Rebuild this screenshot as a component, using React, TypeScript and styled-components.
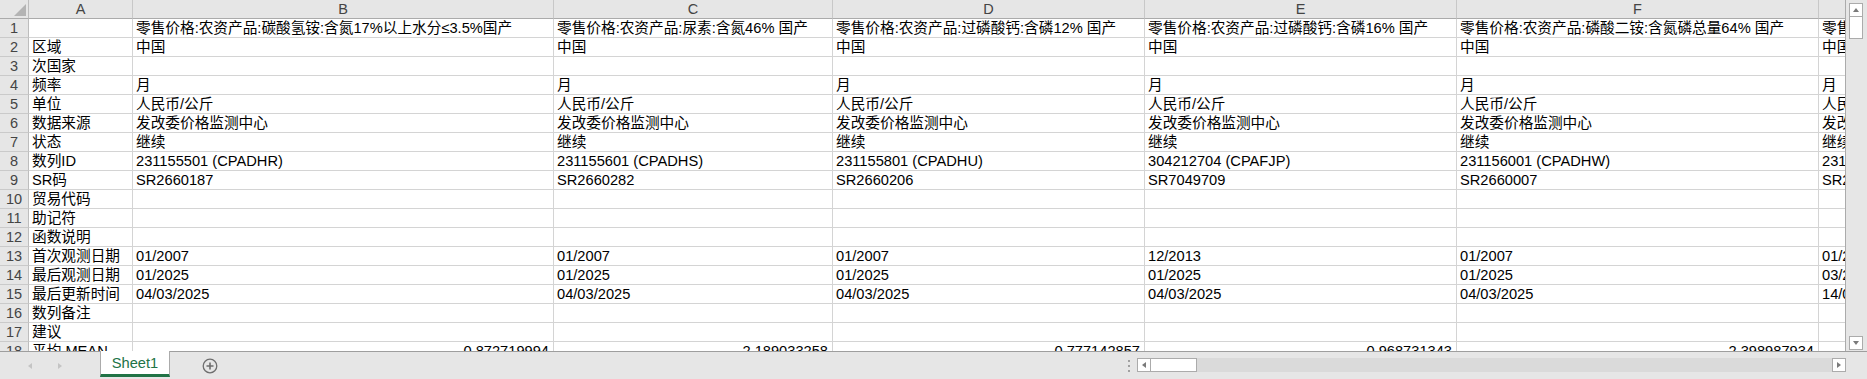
import React from "react";
import styled, { createGlobalStyle } from "styled-components";

const GlobalStyle = createGlobalStyle`
  html, body { margin: 0; padding: 0; background: #ffffff; }
  body { font-family: "Liberation Sans", "Noto Sans CJK SC", sans-serif; }
  * { box-sizing: border-box; }
`;

const FONT = `"Liberation Sans", "Noto Sans CJK SC", sans-serif`;

const Page = styled.div`
  width: 1867px;
  height: 379px;
  overflow: hidden;
  display: grid;
  grid-template-rows: 351px 28px;
  background: #ffffff;
  font-family: ${FONT};
`;

const Workspace = styled.div`
  display: flex;
  height: 351px;
  overflow: hidden;
`;

const Sheet = styled.div`
  width: 1846px;
  flex: none;
  height: 351px;
  overflow: hidden;
  display: grid;
  grid-template-columns: 29px 104px 421px 279px 312px 312px 362px 330px;
  grid-auto-rows: 19px;
  align-content: start;
  border-right: 1px solid #ababab;
`;

const Corner = styled.div`
  background: #e6e6e6;
  border-right: 1px solid #bdbdbd;
  border-bottom: 1px solid #ababab;
  display: flex;
  align-items: flex-end;
  justify-content: flex-end;
  padding: 0 2px 2px 0;
`;

const ColHeader = styled.div`
  background: #e6e6e6;
  border-right: 1px solid #c8c8c8;
  border-bottom: 1px solid #ababab;
  color: #444444;
  font-size: 14.5px;
  line-height: 18px;
  text-align: center;
  overflow: hidden;
  white-space: nowrap;
`;

const RowHeader = styled.div`
  background: #e6e6e6;
  border-right: 1px solid #bdbdbd;
  border-bottom: 1px solid #cacaca;
  color: #444444;
  font-size: 14.5px;
  line-height: 18px;
  text-align: center;
  overflow: hidden;
  white-space: nowrap;
`;

const Cell = styled.div<{ $align?: "left" | "right" }>`
  border-right: 1px solid #d4d4d4;
  border-bottom: 1px solid #d4d4d4;
  padding: 0 4px 0 3px;
  color: #000000;
  font-size: 14.67px;
  line-height: 19px;
  height: 19px;
  overflow: hidden;
  white-space: nowrap;
  text-align: ${(p) => p.$align ?? "left"};
`;

const VScroll = styled.div`
  width: 21px;
  flex: none;
  height: 351px;
  background: #e6e6e6;
  display: flex;
  flex-direction: column;
  padding: 3px 4px 1px 3px;
`;

const ScrollBtn = styled.div`
  width: 14px;
  height: 14px;
  background: #ffffff;
  border: 1px solid #ababab;
  display: flex;
  align-items: center;
  justify-content: center;
  flex: none;
`;

const VThumb = styled.div`
  width: 14px;
  height: 22px;
  background: #ffffff;
  border: 1px solid #ababab;
  border-top: none;
  flex: none;
`;

const Spacer = styled.div`
  flex: 1;
`;

const BottomBar = styled.div`
  height: 28px;
  background: #e6e6e6;
  border-top: 1px solid #9e9e9e;
  display: flex;
  align-items: flex-start;
`;

const NavArea = styled.div`
  width: 100px;
  height: 27px;
  display: flex;
  align-items: center;
  padding-left: 26px;
  gap: 22px;
`;

const SheetTab = styled.div`
  width: 70px;
  height: 26px;
  margin-top: -1px;
  background: #ffffff;
  border-left: 1px solid #ababab;
  border-right: 1px solid #ababab;
  border-bottom: 3px solid #217346;
  color: #217346;
  font-size: 14.67px;
  line-height: 24px;
  text-align: center;
`;

const AddButton = styled.div`
  margin-left: 32px;
  height: 27px;
  display: flex;
  align-items: center;
`;

const Dots = styled.div`
  width: 16px;
  height: 27px;
  display: flex;
  flex-direction: column;
  align-items: center;
  justify-content: center;
  gap: 3px;
`;

const Dot = styled.span`
  width: 2px;
  height: 2px;
  background: #a0a0a0;
  display: block;
`;

const HScroll = styled.div`
  width: 709px;
  height: 14px;
  margin-top: 6px;
  margin-right: 21px;
  display: flex;
  background: #dadada;
`;

const HThumb = styled.div`
  width: 46px;
  height: 14px;
  background: #ffffff;
  border: 1px solid #ababab;
  border-left: none;
`;

const Tri = ({ dir, color = "#7a7a7a" }: { dir: "up" | "down" | "left" | "right"; color?: string }) => {
  const pts: Record<string, string> = {
    up: "1,6 4,2 7,6",
    down: "1,2 4,6 7,2",
    left: "6,1 2,4 6,7",
    right: "2,1 6,4 2,7",
  };
  return (
    <svg width="8" height="8" viewBox="0 0 8 8" style={{ display: "block" }}>
      <polygon points={pts[dir]} fill={color} />
    </svg>
  );
};

const cols = ["A", "B", "C", "D", "E", "F", "G"];

const labels = [
  "",
  "区域",
  "次国家",
  "频率",
  "单位",
  "数据来源",
  "状态",
  "数列ID",
  "SR码",
  "贸易代码",
  "助记符",
  "函数说明",
  "首次观测日期",
  "最后观测日期",
  "最后更新时间",
  "数列备注",
  "建议",
  "平均 MEAN",
];

type Series = {
  name: string;
  id: string;
  sr: string;
  first: string;
  last: string;
  upd: string;
  mean: string;
};

const series: Series[] = [
  { name: "零售价格:农资产品:碳酸氢铵:含氮17%以上水分≤3.5%国产", id: "231155501 (CPADHR)", sr: "SR2660187", first: "01/2007", last: "01/2025", upd: "04/03/2025", mean: "0.872719994" },
  { name: "零售价格:农资产品:尿素:含氮46% 国产", id: "231155601 (CPADHS)", sr: "SR2660282", first: "01/2007", last: "01/2025", upd: "04/03/2025", mean: "2.189033258" },
  { name: "零售价格:农资产品:过磷酸钙:含磷12% 国产", id: "231155801 (CPADHU)", sr: "SR2660206", first: "01/2007", last: "01/2025", upd: "04/03/2025", mean: "0.777142857" },
  { name: "零售价格:农资产品:过磷酸钙:含磷16% 国产", id: "304212704 (CPAFJP)", sr: "SR7049709", first: "12/2013", last: "01/2025", upd: "04/03/2025", mean: "0.968731343" },
  { name: "零售价格:农资产品:磷酸二铵:含氮磷总量64% 国产", id: "231156001 (CPADHW)", sr: "SR2660007", first: "01/2007", last: "01/2025", upd: "04/03/2025", mean: "2.398987934" },
  { name: "零售价格:农资产品:氯化钾:含量60% 国产", id: "231156101 (CPADHX)", sr: "SR2660211", first: "01/2007", last: "03/2025", upd: "14/03/2025", mean: "2.913406271" },
];

const valueFor = (s: Series, row: number): string => {
  switch (row) {
    case 1: return s.name;
    case 2: return "中国";
    case 4: return "月";
    case 5: return "人民币/公斤";
    case 6: return "发改委价格监测中心";
    case 7: return "继续";
    case 8: return s.id;
    case 9: return s.sr;
    case 13: return s.first;
    case 14: return s.last;
    case 15: return s.upd;
    default: return "";
  }
};

export default function App() {
  return (
    <>
      <GlobalStyle />
      <Page>
        <Workspace>
          <Sheet>
            <Corner>
              <svg width="12" height="12" viewBox="0 0 12 12" style={{ display: "block" }}>
                <polygon points="12,0 12,12 0,12" fill="#b4b4b4" />
              </svg>
            </Corner>
            {cols.map((c) => (
              <ColHeader key={c}>{c}</ColHeader>
            ))}
            {labels.map((label, i) => {
              const row = i + 1;
              return (
                <React.Fragment key={row}>
                  <RowHeader>{row}</RowHeader>
                  <Cell>{label}</Cell>
                  {series.map((s, j) =>
                    row === 18 ? (
                      <Cell key={j} $align="right">{s.mean}</Cell>
                    ) : (
                      <Cell key={j}>{valueFor(s, row)}</Cell>
                    )
                  )}
                </React.Fragment>
              );
            })}
          </Sheet>
          <VScroll>
            <ScrollBtn>
              <Tri dir="up" />
            </ScrollBtn>
            <VThumb />
            <Spacer />
            <ScrollBtn>
              <Tri dir="down" />
            </ScrollBtn>
          </VScroll>
        </Workspace>
        <BottomBar>
          <NavArea>
            <Tri dir="left" color="#c4c4c4" />
            <Tri dir="right" color="#c4c4c4" />
          </NavArea>
          <SheetTab>Sheet1</SheetTab>
          <AddButton>
            <svg width="16" height="16" viewBox="0 0 16 16" style={{ display: "block" }}>
              <circle cx="8" cy="8" r="6.8" fill="none" stroke="#6e6e6e" strokeWidth="1.3" />
              <path d="M8 4.5v7M4.5 8h7" stroke="#6e6e6e" strokeWidth="1.6" />
            </svg>
          </AddButton>
          <Spacer />
          <Dots>
            <Dot />
            <Dot />
            <Dot />
          </Dots>
          <HScroll>
            <ScrollBtn>
              <Tri dir="left" />
            </ScrollBtn>
            <HThumb />
            <Spacer />
            <ScrollBtn>
              <Tri dir="right" />
            </ScrollBtn>
          </HScroll>
        </BottomBar>
      </Page>
    </>
  );
}
